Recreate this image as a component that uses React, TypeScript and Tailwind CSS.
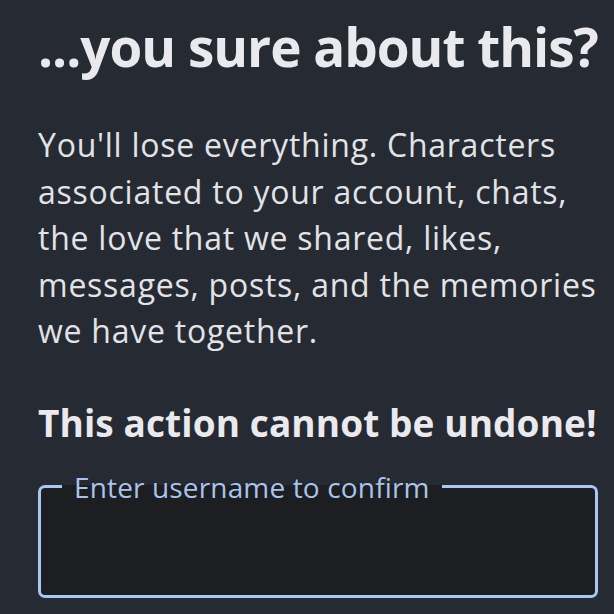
export default function App() {
  return (
    <div className="min-h-screen bg-[#262a33] pl-[38px] pr-[16px] pt-[14px] font-['Open_Sans',sans-serif]">
      <h1 className="text-[53px] font-bold leading-[65px] tracking-[-1px] text-[#e9e9ee] whitespace-nowrap">
        ...you sure about this?
      </h1>
      <p className="mt-[43px] text-[32px] leading-[46.5px] tracking-[0.75px] text-[#e2e3e6]">
        You'll lose everything. Characters associated to your account, chats, the love that we shared, likes,
        messages, posts, and the memories we have together.
      </p>
      <p className="mt-[45px] text-[37px] font-bold leading-[46px] tracking-[0.1px] text-[#e9e9ee] whitespace-nowrap">
        This action cannot be undone!
      </p>
      <fieldset className="mt-[25px] h-[127px] rounded-[7px] border-[3px] border-[#a8c7f5] bg-[#1d1e21] pl-[21px] pr-[20px]">
        <legend className="px-[12px] text-[28px] leading-[32px] tracking-[0.15px] text-[#a9c4ec]">
          Enter username to confirm
        </legend>
      </fieldset>
    </div>
  )
}
